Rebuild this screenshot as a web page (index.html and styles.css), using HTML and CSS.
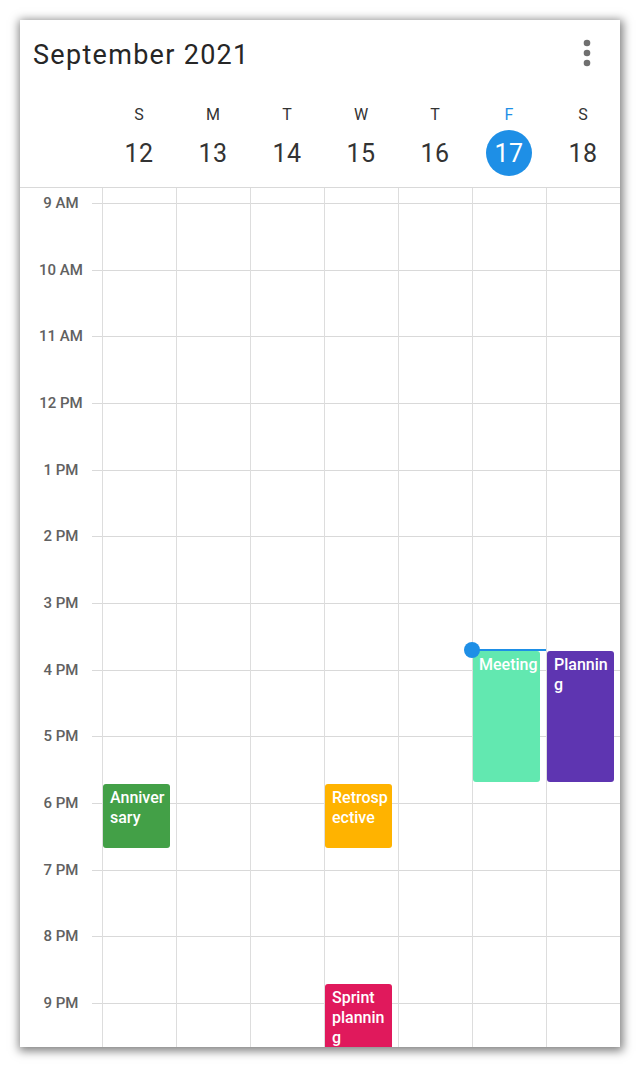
FILE: index.html
```html
<!DOCTYPE html>
<html>
<head>
<meta charset="utf-8">
<link rel="stylesheet" href="styles.css">
</head>
<body>
<div class="card">
  <div class="title-row">
    <div class="title">September 2021</div>
    <svg class="more" width="8" height="30" viewBox="0 0 8 30"><circle cx="4" cy="5" r="3.3"/><circle cx="4" cy="15" r="3.3"/><circle cx="4" cy="25" r="3.3"/></svg>
  </div>
  <div class="week">
    <div></div>
    <div class="wd"><span class="wd-l">S</span><span class="wd-n">12</span></div>
    <div class="wd"><span class="wd-l">M</span><span class="wd-n">13</span></div>
    <div class="wd"><span class="wd-l">T</span><span class="wd-n">14</span></div>
    <div class="wd"><span class="wd-l">W</span><span class="wd-n">15</span></div>
    <div class="wd"><span class="wd-l">T</span><span class="wd-n">16</span></div>
    <div class="wd today"><span class="wd-l">F</span><span class="wd-n">17</span></div>
    <div class="wd"><span class="wd-l">S</span><span class="wd-n">18</span></div>
  </div>
  <div class="body">
    <div class="hours">
      <div class="hour"><span class="hour-label">9 AM</span><span class="hour-line"></span></div>
      <div class="hour"><span class="hour-label">10 AM</span><span class="hour-line"></span></div>
      <div class="hour"><span class="hour-label">11 AM</span><span class="hour-line"></span></div>
      <div class="hour"><span class="hour-label">12 PM</span><span class="hour-line"></span></div>
      <div class="hour"><span class="hour-label">1 PM</span><span class="hour-line"></span></div>
      <div class="hour"><span class="hour-label">2 PM</span><span class="hour-line"></span></div>
      <div class="hour"><span class="hour-label">3 PM</span><span class="hour-line"></span></div>
      <div class="hour"><span class="hour-label">4 PM</span><span class="hour-line"></span></div>
      <div class="hour"><span class="hour-label">5 PM</span><span class="hour-line"></span></div>
      <div class="hour"><span class="hour-label">6 PM</span><span class="hour-line"></span></div>
      <div class="hour"><span class="hour-label">7 PM</span><span class="hour-line"></span></div>
      <div class="hour"><span class="hour-label">8 PM</span><span class="hour-line"></span></div>
      <div class="hour"><span class="hour-label">9 PM</span><span class="hour-line"></span></div>
    </div>
    <div class="days">
      <div></div>
      <div class="day">
        <div class="event ev-evening green">Anniversary</div>
      </div>
      <div class="day"></div>
      <div class="day"></div>
      <div class="day">
        <div class="event ev-evening amber">Retrospective</div>
        <div class="event ev-night pink">Sprint planning</div>
      </div>
      <div class="day"></div>
      <div class="day">
        <div class="event ev-afternoon mint nowrap">Meeting</div>
        <div class="now"></div>
      </div>
      <div class="day">
        <div class="event ev-afternoon purple">Planning</div>
      </div>
    </div>
  </div>
</div>
</body>
</html>
```

FILE: styles.css
```css
html, body {
  margin: 0;
  padding: 0;
  background: #ffffff;
}

body {
  font-family: Roboto, "Noto Sans", sans-serif;
  color: #222222;
}

.card {
  margin: 20px;
  width: 600px;
  height: 1027px;
  background: #ffffff;
  overflow: hidden;
  box-shadow: 1px 2px 9px 2px rgba(0, 0, 0, 0.5);
  display: flex;
  flex-direction: column;
}

.title-row {
  display: flex;
  justify-content: space-between;
  align-items: flex-start;
  padding: 20px 13px 0 13px;
  height: 30px;
}

.title {
  font-size: 27px;
  line-height: 30px;
  font-weight: 400;
  letter-spacing: 1.3px;
  color: #262626;
}

.more {
  fill: #707070;
  margin-top: -2px;
  margin-right: 16px;
}

.week {
  display: grid;
  grid-template-columns: 82px repeat(7, 1fr);
  padding: 35px 0 11px 0;
  border-bottom: 1px solid #d9d9d9;
}

.wd {
  display: flex;
  flex-direction: column;
  align-items: center;
}

.wd-l {
  font-size: 16px;
  line-height: 20px;
  color: #333333;
  margin-bottom: 5px;
}

.wd-n {
  width: 46px;
  height: 46px;
  line-height: 47px;
  text-align: center;
  font-size: 25px;
  letter-spacing: 0.5px;
  color: #333333;
  border-radius: 50%;
}

.today .wd-l {
  color: #1e8fe6;
}

.today .wd-n {
  background: #1e8fe6;
  color: #ffffff;
}

.body {
  display: grid;
  flex: 1;
  overflow: hidden;
}

.hours {
  grid-area: 1 / 1;
  padding-top: 15px;
}

.hour {
  display: flex;
  height: 66.667px;
}

.hour-label {
  width: 82px;
  flex: none;
  text-align: center;
  font-size: 15px;
  line-height: 18px;
  font-weight: 500;
  color: #616161;
  margin-top: -9px;
  height: 18px;
}

.hour-line {
  flex: 1;
  margin-left: -10px;
  border-top: 1px solid #d9d9d9;
}

.days {
  grid-area: 1 / 1;
  display: grid;
  grid-template-columns: 82px repeat(7, 1fr);
}

.day {
  position: relative;
  border-left: 1px solid #dddddd;
}

.event {
  position: absolute;
  left: 0;
  width: 67px;
  box-sizing: border-box;
  padding: 4px 2px 0 7px;
  border-radius: 3px;
  color: #ffffff;
  font-size: 16px;
  line-height: 20px;
  font-weight: 500;
  overflow-wrap: anywhere;
  overflow: hidden;
}

.nowrap {
  white-space: nowrap;
  padding-left: 6px;
  padding-right: 0;
}

.ev-evening {
  top: 596px;
  height: 64px;
}

.ev-night {
  top: 796px;
  height: 100px;
}

.ev-afternoon {
  top: 463px;
  height: 131px;
}

.green { background: #43a047; }
.amber { background: #ffb300; }
.pink { background: #e0195c; }
.mint { background: #62e8b0; }
.purple { background: #5e35b1; }

.now {
  position: absolute;
  top: 461px;
  left: -1px;
  right: 0;
  height: 2px;
  background: #1e8fe6;
}

.now::before {
  content: "";
  position: absolute;
  left: -8px;
  top: -7px;
  width: 16px;
  height: 16px;
  border-radius: 50%;
  background: #1e8fe6;
}
```
